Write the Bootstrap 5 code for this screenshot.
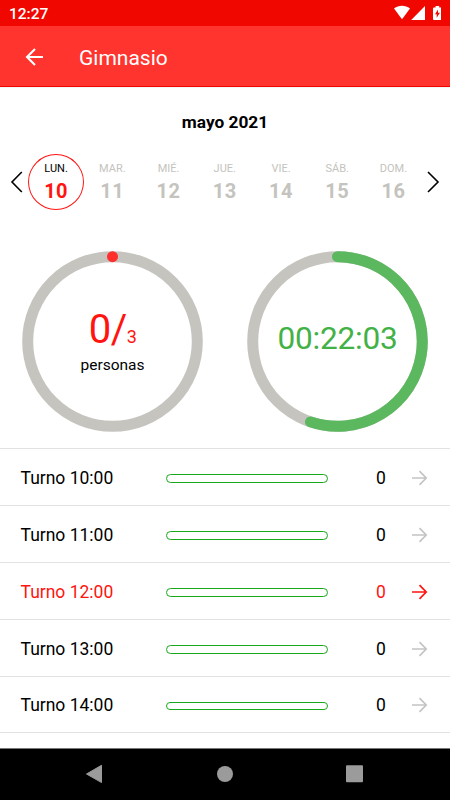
<!DOCTYPE html>
<html lang="es">
<head>
<meta charset="utf-8">
<meta name="viewport" content="width=device-width, initial-scale=1">
<title>Gimnasio</title>
<link href="https://cdn.jsdelivr.net/npm/bootstrap@5.3.0/dist/css/bootstrap.min.css" rel="stylesheet">
<style>
body{font-family:Roboto,"Liberation Sans",sans-serif;color:#000;background:#fff;line-height:1}
svg{display:block;flex:none}
.screen{height:800px;width:450px}
.statusbar{height:26px;background:#f00800;padding:0 9px 0 9px}
.clock{font-size:15.500px;font-weight:500;padding-top:3.500px}
.status-icons{width:50px;height:26px}
.appbar{height:61px;background:#ff342e;border-bottom:1px solid #f00800;padding-left:22px}
.app-title{font-size:21px;margin-left:33px;padding-top:5px}
.shade{height:1px;background:#f4f4f4}
.month{font-size:17.300px;font-weight:700;padding-top:26px;height:65.600px}
.week{height:56px;padding:0 8.500px 0 8px}
.prev-week,.next-week{width:20px}
.day{flex:1 1 0;height:56px;color:#c4c3be;border:1px solid transparent;border-radius:50%;padding-top:8.500px}
.day-name{font-size:11px}
.day-num{font-size:20px;font-weight:700;margin-top:6.500px;letter-spacing:.5px}
.day.active{border-color:#ff1410;color:#ff1410}
.day.active .day-name{color:#000}
.dials{height:238.400px;padding-top:41.400px}
.dial{width:181px;height:181px}
.people{color:#ff1410;font-size:40px;font-weight:400;letter-spacing:-.5px}
.people .total{font-size:18px}
.unit{font-size:15.500px;margin-top:8px}
.timer{color:#42b146;font-size:31.600px;font-weight:400;padding-bottom:6px;letter-spacing:-.2px}
.slots{height:300px}
.slot{height:56.900px;flex:none;border-top:1px solid #e2e2e2;padding:2px 22px 0 20.500px;font-size:17.500px}
.slot>*{flex:none}
.slot-name{width:145.500px;padding-top:1.500px}
.meter{width:162px;height:8.500px;border:1px solid #18a818;border-radius:5px;margin-top:1.500px}
.count{width:20px;margin-left:43px;padding-top:1.500px}
.go{margin-left:19px;color:#c4c4c6}
.slot.active,.slot.active .go{color:#ff1410}
.androidbar{height:52px;background:#000;border-top:1px solid #777}
</style>
<script src="https://cdn.jsdelivr.net/npm/bootstrap@5.3.0/dist/js/bootstrap.bundle.min.js"></script>
</head>
<body>
<div class="screen d-flex flex-column overflow-hidden">
  <div class="statusbar d-flex justify-content-between align-items-center text-white">
    <span class="clock">12:27</span>
    <svg class="status-icons" viewBox="391 0 50 26" fill="#fff"><path d="M394 8.6C398.8 4.9 405.2 4.9 410 8.6L402 19.3Z"/><path d="M411.2 20H425V6Z"/><path fill-rule="evenodd" d="M434 7.4h1.6V6h3.6v1.4h1.6q1 0 1 1V19q0 1-1 1H434q-1 0-1-1V8.400q0-1 1-1ZM438 9.500l-3 4.700h1.700v3.500l3.200-4.900H438Z"/></svg>
  </div>
  <header class="appbar d-flex align-items-center text-white">
    <svg width="24" height="24" viewBox="0 0 24 24" fill="none" stroke="#fff" stroke-width="2.100"><path d="M21 13H5M13 5L5 13L13 21"/></svg>
    <h1 class="app-title mb-0 fw-normal">Gimnasio</h1>
  </header>
  <div class="shade"></div>
  <div class="month text-center">mayo 2021</div>
  <div class="week d-flex align-items-center">
    <svg class="prev-week" height="24" viewBox="0 0 20 24" fill="none" stroke="#000" stroke-width="1.600"><path d="M13.800 2L4 12L13.800 22"/></svg>
    <div class="day active text-center"><div class="day-name">LUN.</div><div class="day-num">10</div></div>
    <div class="day text-center"><div class="day-name">MAR.</div><div class="day-num">11</div></div>
    <div class="day text-center"><div class="day-name">MIÉ.</div><div class="day-num">12</div></div>
    <div class="day text-center"><div class="day-name">JUE.</div><div class="day-num">13</div></div>
    <div class="day text-center"><div class="day-name">VIE.</div><div class="day-num">14</div></div>
    <div class="day text-center"><div class="day-name">SÁB.</div><div class="day-num">15</div></div>
    <div class="day text-center"><div class="day-name">DOM.</div><div class="day-num">16</div></div>
    <svg class="next-week" height="24" viewBox="0 0 20 24" fill="none" stroke="#000" stroke-width="1.600"><path d="M6 2L16 12L6 22"/></svg>
  </div>
  <div class="dials d-flex justify-content-around">
    <div class="dial position-relative">
      <svg width="181" height="181" viewBox="-90.500 -90.500 181 181" fill="none" stroke-width="11"><circle r="84.800" stroke="#c5c4bf"/><circle cy="-84.800" r="5.500" fill="#ff302b"/></svg>
      <div class="position-absolute top-0 start-0 w-100 h-100 d-flex flex-column align-items-center justify-content-center">
        <div class="people">0/<span class="total">3</span></div>
        <div class="unit">personas</div>
      </div>
    </div>
    <div class="dial position-relative">
      <svg width="181" height="181" viewBox="-90.500 -90.500 181 181" fill="none" stroke-width="11"><circle r="84.800" stroke="#c5c4bf"/><path stroke="#5cb85f" stroke-linecap="round" d="M0-84.800A84.800 84.800 0 1 1-27 80.400"/></svg>
      <div class="position-absolute top-0 start-0 w-100 h-100 d-flex align-items-center justify-content-center"><span class="timer">00:22:03</span></div>
    </div>
  </div>
  <main class="slots overflow-hidden d-flex flex-column">
    <div class="slot d-flex align-items-center"><span class="slot-name">Turno 10:00</span><span class="meter"></span><span class="count text-center">0</span><svg class="go" width="18" height="18" viewBox="0 0 18 18" fill="none" stroke="currentColor" stroke-width="1.700"><path d="M2 9H16M9.500 2.200L16.200 9L9.500 15.800"/></svg></div>
    <div class="slot d-flex align-items-center"><span class="slot-name">Turno 11:00</span><span class="meter"></span><span class="count text-center">0</span><svg class="go" width="18" height="18" viewBox="0 0 18 18" fill="none" stroke="currentColor" stroke-width="1.700"><path d="M2 9H16M9.500 2.200L16.200 9L9.500 15.800"/></svg></div>
    <div class="slot active d-flex align-items-center"><span class="slot-name">Turno 12:00</span><span class="meter"></span><span class="count text-center">0</span><svg class="go" width="18" height="18" viewBox="0 0 18 18" fill="none" stroke="currentColor" stroke-width="1.700"><path d="M2 9H16M9.500 2.200L16.200 9L9.500 15.800"/></svg></div>
    <div class="slot d-flex align-items-center"><span class="slot-name">Turno 13:00</span><span class="meter"></span><span class="count text-center">0</span><svg class="go" width="18" height="18" viewBox="0 0 18 18" fill="none" stroke="currentColor" stroke-width="1.700"><path d="M2 9H16M9.500 2.200L16.200 9L9.500 15.800"/></svg></div>
    <div class="slot d-flex align-items-center"><span class="slot-name">Turno 14:00</span><span class="meter"></span><span class="count text-center">0</span><svg class="go" width="18" height="18" viewBox="0 0 18 18" fill="none" stroke="currentColor" stroke-width="1.700"><path d="M2 9H16M9.500 2.200L16.200 9L9.500 15.800"/></svg></div>
    <div class="slot"></div>
  </main>
  <footer class="androidbar mt-auto d-flex">
    <svg width="450" height="51" viewBox="0 749 450 51" fill="#9b9b9b"><path stroke="#9b9b9b" stroke-linejoin="round" d="M86.500 774L101.500 765.300V782.500Z"/><circle cx="225" cy="774" r="8"/><rect x="346" y="765.300" width="17" height="17" rx="1"/></svg>
  </footer>
</div>
</body>
</html>
